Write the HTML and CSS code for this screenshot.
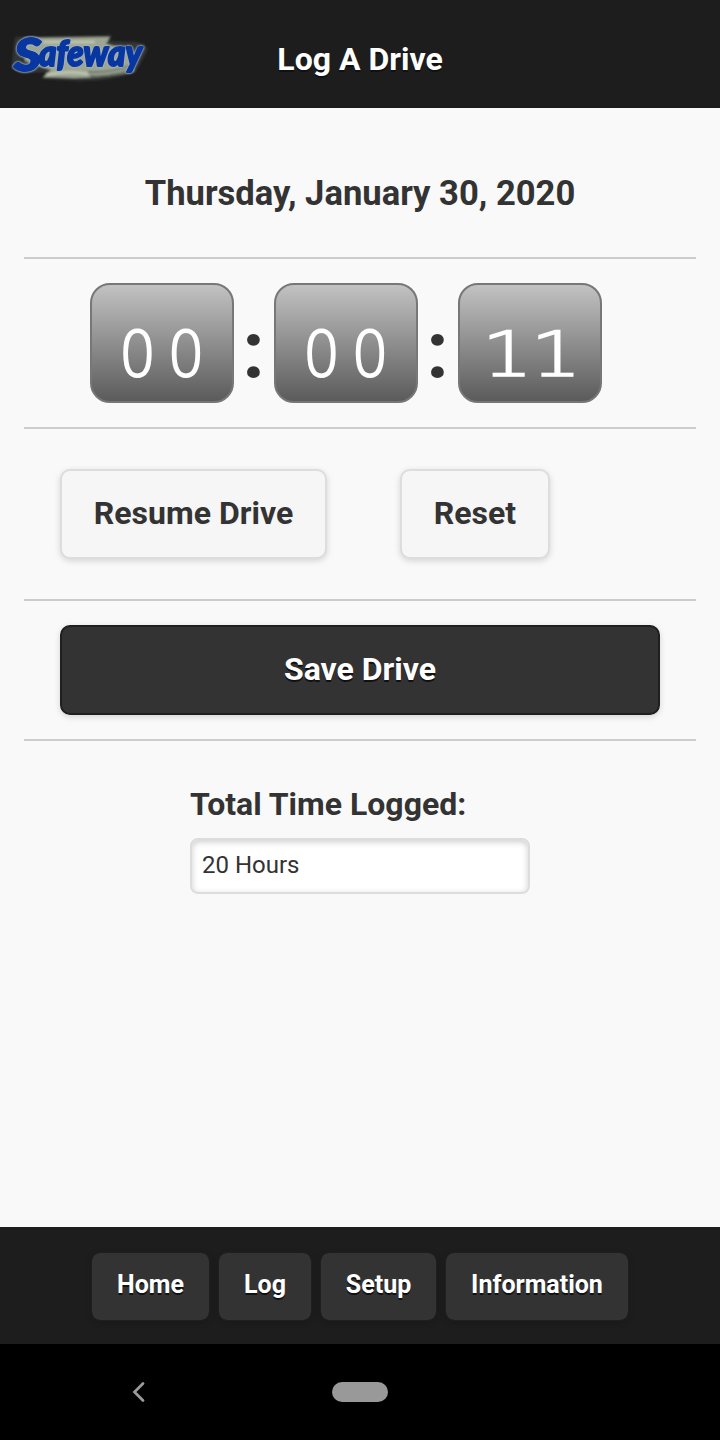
FILE: index.html
```html
<!DOCTYPE html>
<html lang="en">
<head>
    <meta charset="UTF-8">
    <meta name="viewport" content="width=device-width, initial-scale=1.0">
    <title>Log A Drive</title>
    <link rel="stylesheet" href="styles.css">
</head>
<body>

    <header class="header">
        <svg class="logo" width="144" height="60" viewBox="0 0 144 60">
            <defs>
                <filter id="soft" x="-10%" y="-20%" width="120%" height="140%">
                    <feGaussianBlur stdDeviation="1.2"/>
                </filter>
            </defs>
            <g filter="url(#soft)">
                <path d="M7 9 L104 7 L101 13 L128 14 Q143 17 138 25 L128 44 Q105 53 70 53 L33 51 L39 44 L14 45 Q4 42 4 34 Z" fill="#303536"/>
                <path d="M17 10 L102 9 L98 16 L118 21 L126 43 Q100 50 66 50 L35 49 L43 42 L17 33 Z" fill="#9da593"/>
                <path d="M35 14 L87 14 M38 47 Q60 42 80 46" stroke="#bcc4ab" stroke-width="3" fill="none"/>
                <path d="M80 44 Q105 45 123 37 M82 48 Q105 48 124 41" stroke="#50594f" stroke-width="1.3" fill="none"/>
            </g>
            <g class="logo-text">
                <text x="6" y="43" font-size="46" textLength="27" lengthAdjust="spacingAndGlyphs">S</text>
                <text x="31" y="38" font-size="36" textLength="103" lengthAdjust="spacingAndGlyphs">afeway</text>
            </g>
        </svg>
        <h1 class="title">Log A Drive</h1>
    </header>

    <main class="content">
        <h3 class="date">Thursday, January 30, 2020</h3>
        <hr>
        <div class="timer">
            <div class="time-box"><span>00</span></div>
            <div class="colon">:</div>
            <div class="time-box"><span>00</span></div>
            <div class="colon">:</div>
            <div class="time-box"><span class="ones">11</span></div>
        </div>
        <hr>
        <div class="controls">
            <button class="btn">Resume Drive</button>
            <button class="btn btn-reset">Reset</button>
        </div>
        <hr>
        <div class="save">
            <button class="btn btn-save">Save Drive</button>
        </div>
        <hr>
        <div class="total">
            <label for="totalTime">Total Time Logged:</label>
            <input type="text" id="totalTime" class="total-input" value="20 Hours">
        </div>
    </main>

    <footer class="footer">
        <a class="nav-btn nav-home">Home</a>
        <a class="nav-btn nav-log">Log</a>
        <a class="nav-btn nav-setup">Setup</a>
        <a class="nav-btn nav-info">Information</a>
    </footer>

    <div class="system-bar">
        <svg class="back" width="16" height="24" viewBox="0 0 16 24">
            <path d="M13 3.5 L4.5 12 L13 20.5" fill="none" stroke="#999" stroke-width="2.8" stroke-linecap="round"/>
        </svg>
        <div class="pill"></div>
    </div>

</body>
</html>
```

FILE: styles.css
```css
* {
    box-sizing: border-box;
}

body {
    margin: 0;
    height: 1440px;
    display: flex;
    flex-direction: column;
    background-color: #f9f9f9;
    color: #333;
    font-family: Roboto, sans-serif;
    font-size: 32px;
    overflow: hidden;
}

.header {
    height: 108px;
    display: grid;
    grid-template-columns: 150px 1fr 150px;
    background-color: #1d1d1d;
    border-bottom: 2px solid #1b1b1b;
}

.logo {
    margin: 28px 0 0 8px;
    overflow: visible;
}

.logo-text {
    font-family: Lato, sans-serif;
    font-weight: 900;
    font-style: italic;
    fill: #0837a2;
    stroke: #0837a2;
    stroke-width: 2;
    stroke-linejoin: round;
    filter: drop-shadow(0 0 1px #b9c6cc) drop-shadow(0 0 0.5px #8f9da8) blur(0.4px);
}

.title {
    margin: 0;
    padding-top: 38px;
    text-align: center;
    font-size: 32px;
    line-height: 42px;
    color: #fff;
    text-shadow: 0 2px 0 #111;
}

.content {
    flex: 1;
    padding: 0 24px;
}

hr {
    margin: 0;
    border: none;
    height: 2px;
    background-color: #ccc;
}

.date {
    margin: 0;
    height: 149px;
    padding-top: 62px;
    text-align: center;
    font-size: 34.6px;
    line-height: 46px;
}

.timer {
    display: flex;
    height: 168px;
    padding: 24px 0 0 66px;
}

.time-box {
    width: 144px;
    height: 120px;
    border: 2px solid #777;
    border-radius: 20px;
    background: linear-gradient(#c2c2c2, #5b5b5b);
    color: #fff;
    text-align: center;
    font-family: "DejaVu Sans Light", "DejaVu Sans", sans-serif;
    font-weight: 200;
    font-size: 62px;
    line-height: 140px;
}

.time-box span {
    display: inline-block;
    letter-spacing: 12px;
    margin-right: -12px;
    transform: translateX(-1px) scaleX(0.94);
    -webkit-text-stroke: 2px #fff;
}

.time-box .ones {
    letter-spacing: -2px;
    margin-right: 2px;
    transform: translateX(1px) scaleX(1.3);
    -webkit-text-stroke: 1.6px #fff;
}

.colon {
    width: 40px;
    padding-right: 1px;
    text-align: center;
    font-size: 80px;
    font-weight: bold;
    line-height: 136px;
}

.controls {
    display: flex;
    height: 170px;
    padding: 40px 36px;
    gap: 73px;
}

.btn {
    height: 90px;
    width: 267px;
    padding: 0 0 2px;
    border: 2px solid #ddd;
    border-radius: 10px;
    background-color: #f6f6f6;
    color: #333;
    font-family: Roboto, sans-serif;
    font-size: 32px;
    font-weight: bold;
    text-shadow: 0 2px 0 #f3f3f3;
    box-shadow: 0 2px 6px rgba(0, 0, 0, 0.15);
}

.btn-reset {
    width: 150px;
}

.save {
    height: 138px;
    padding: 24px 36px;
}

.btn-save {
    width: 100%;
    border-color: #1f1f1f;
    background-color: #333;
    color: #fff;
    text-shadow: 0 2px 0 #111;
}

.total {
    width: 340px;
    margin: 0 auto;
    padding-top: 42px;
}

.total label {
    display: block;
    height: 55px;
    font-weight: bold;
    line-height: 42px;
}

.total-input {
    display: block;
    width: 340px;
    height: 56px;
    padding: 0 10px 2px;
    border: 2px solid #ddd;
    border-radius: 8px;
    background-color: #fff;
    color: #333;
    font-family: Roboto, sans-serif;
    font-size: 24px;
    box-shadow: inset 0 2px 6px rgba(0, 0, 0, 0.2);
}

.footer {
    height: 117px;
    padding: 25px 0 0 91px;
    display: flex;
    gap: 8px;
    background-color: #1d1d1d;
}

.nav-btn {
    height: 69px;
    border: 1px solid #1f1f1f;
    border-radius: 9px;
    background-color: #333;
    background-clip: padding-box;
    color: #fff;
    text-align: center;
    font-size: 25px;
    font-weight: bold;
    line-height: 64px;
    text-shadow: 0 2px 0 #111;
    box-shadow: 0 2px 6px rgba(0, 0, 0, 0.15);
}

.nav-home {
    width: 119px;
}

.nav-log {
    width: 94px;
}

.nav-setup {
    width: 117px;
}

.nav-info {
    width: 184px;
}

.system-bar {
    height: 96px;
    display: flex;
    align-items: center;
    padding-left: 130px;
    background-color: #000;
}

.pill {
    width: 56px;
    height: 20px;
    margin-left: 186px;
    border-radius: 10px;
    background-color: #999;
}
```
